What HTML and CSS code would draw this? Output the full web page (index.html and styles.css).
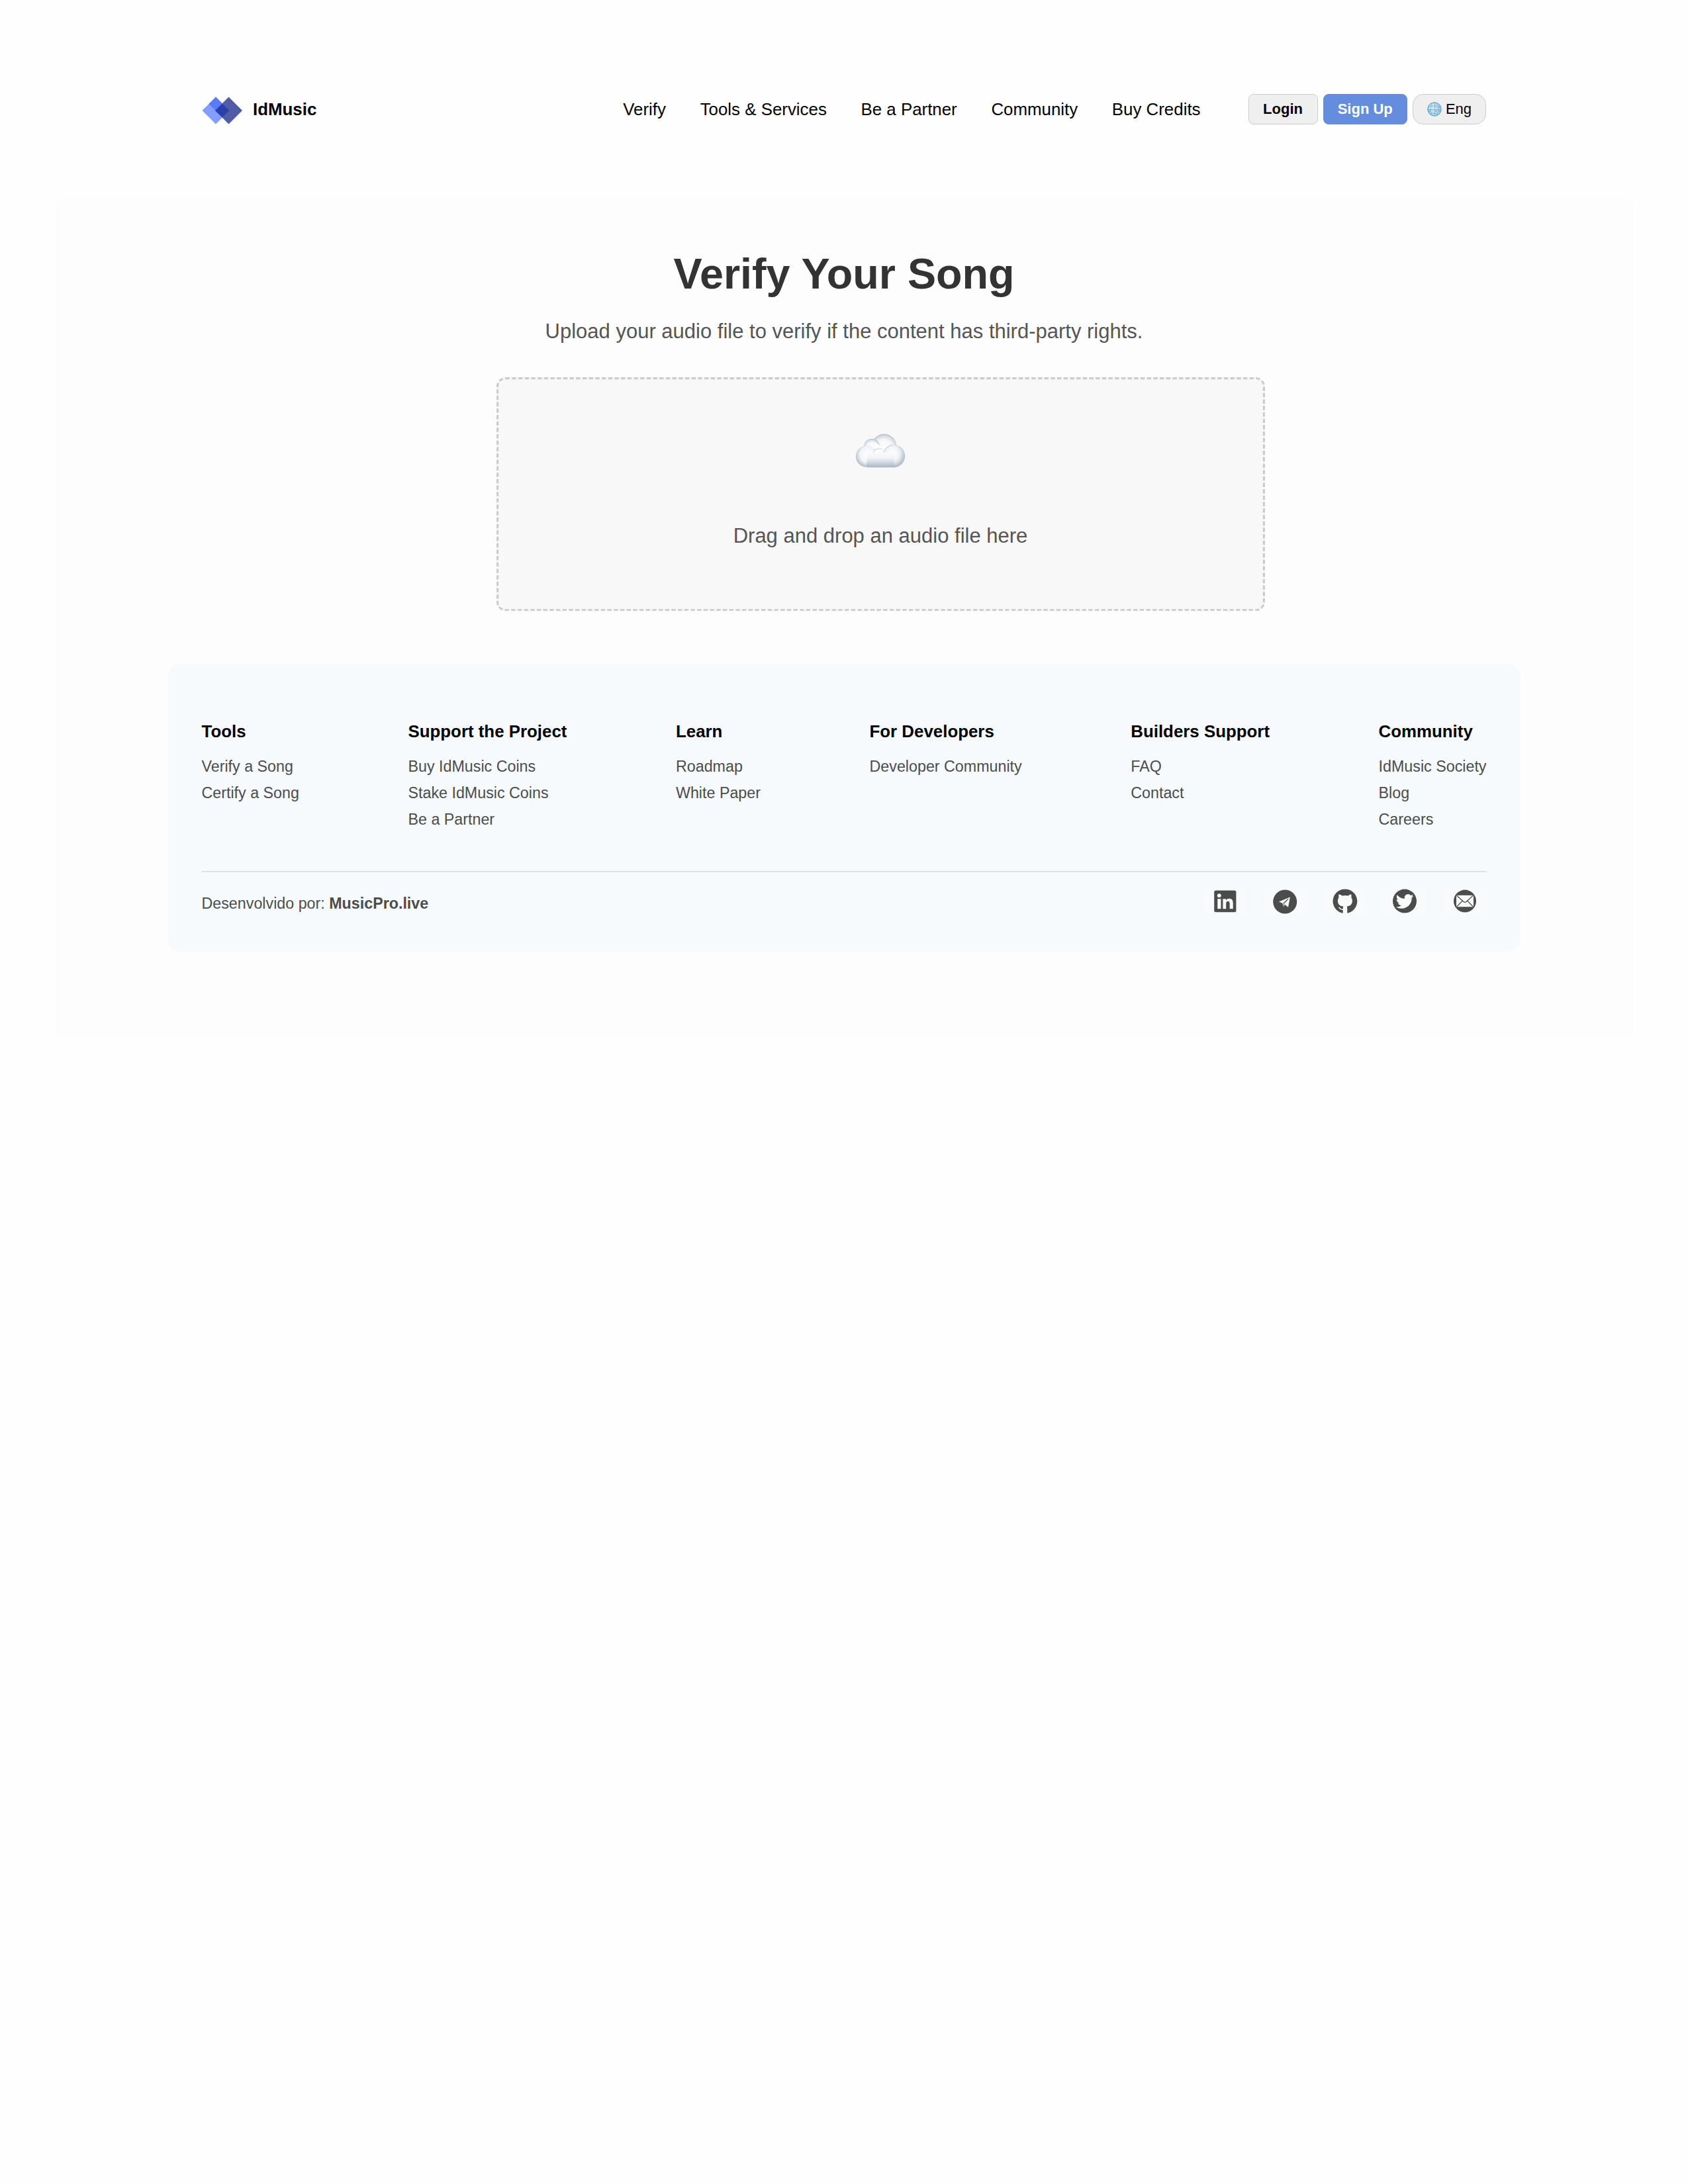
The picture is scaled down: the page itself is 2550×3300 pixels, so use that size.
FILE: index.html
```html
<!DOCTYPE html>
<html lang="en">
<head>
<meta charset="utf-8">
<title>IdMusic</title>
<link rel="stylesheet" href="styles.css">
</head>
<body>
<header class="header">
  <a class="brand">
    <svg class="brand-mark" width="62" height="42" viewBox="0 0 62 42">
      <path d="M21 0.5 41.500 21 21 41.500 0.500 21z" fill="#829dfc"/>
      <path d="M21 0.500 41.500 21 31 31.500 10.500 11z" fill="#587cf8"/>
      <path d="M40.500 0.500 61 21 40.500 41.500 20 21z" fill="#505ca8"/>
      <path d="M30.750 10.750 41.500 21 30.750 31.250 20 21z" fill="#2a40a8"/>
    </svg>
    <span>IdMusic</span>
  </a>
  <div class="header-right">
    <nav class="nav">
      <a>Verify</a><a>Tools &amp; Services</a><a>Be a Partner</a><a>Community</a><a>Buy Credits</a>
    </nav>
    <div class="actions">
      <button class="btn btn-login">Login</button>
      <button class="btn btn-signup">Sign Up</button>
      <button class="btn btn-lang">
        <svg width="22" height="22" viewBox="0 0 22 22">
          <circle cx="11" cy="11" r="10.500" fill="#7cc3e6"/>
          <circle cx="8.500" cy="9" r="6" fill="#b4e0f2"/>
          <g fill="none" stroke="#e9f7fc" stroke-width="1.800"><path d="M1.500 11h19M3.500 5.500h15M3.500 16.500h15M11 1v20"/><ellipse cx="11" cy="11" rx="5" ry="10"/></g>
          <g fill="none" stroke="#4c93b8" stroke-width="0.700"><circle cx="11" cy="11" r="10.300"/><path d="M1 11.500h20M3 6h16M3 17h16M11.500 1v20"/><ellipse cx="11" cy="11" rx="5.500" ry="10"/></g>
        </svg>
        <span>Eng</span>
      </button>
    </div>
  </div>
</header>

<main class="main">
  <h1 class="title">Verify Your Song</h1>
  <p class="subtitle">Upload your audio file to verify if the content has third-party rights.</p>
  <section class="dropzone">
    <svg class="dropzone-border" width="1161" height="353.400"><rect x="1.600" y="1.600" width="1157.800" height="350.200" rx="12" fill="#f8f8f8" stroke="#ccc" stroke-width="3.200" stroke-dasharray="6.460 3.230"/></svg>
    <svg class="cloud" width="76" height="52" viewBox="0 0 76 52">
      <defs>
        <radialGradient id="puff" cx=".5" cy=".55" r=".56"><stop offset="0" stop-color="#fff"/><stop offset=".6" stop-color="#f4f6f8"/><stop offset=".85" stop-color="#d5dce3"/><stop offset="1" stop-color="#a9b6c4"/></radialGradient>
        <radialGradient id="side" cx=".55" cy=".42" r=".6"><stop offset="0" stop-color="#fff"/><stop offset=".6" stop-color="#f2f4f7"/><stop offset="1" stop-color="#aeb9c6"/></radialGradient>
        <radialGradient id="sideRight" cx=".42" cy=".4" r=".62"><stop offset="0" stop-color="#fff"/><stop offset=".55" stop-color="#eff2f5"/><stop offset="1" stop-color="#aeb9c6"/></radialGradient>
        <linearGradient id="body" x1="0" y1="0" x2="0" y2="1"><stop offset="0" stop-color="#fdfdfe"/><stop offset=".5" stop-color="#f2f4f7"/><stop offset="1" stop-color="#a9b5c3"/></linearGradient>
      </defs>
      <circle cx="43.500" cy="19.500" r="18.800" fill="url(#puff)"/>
      <circle cx="25" cy="20" r="12" fill="url(#puff)"/>
      <circle cx="29" cy="23" r="9" fill="#fbfcfd"/>
      <circle cx="17.200" cy="34.500" r="16.300" fill="url(#side)"/>
      <circle cx="58" cy="34" r="17.200" fill="url(#sideRight)"/>
      <path d="M18 30C24 26 28 24 31 25C36 21 42 24 44 28L58 30L60 51.200H17z" fill="url(#body)"/>
      <path d="M27 28C29 24 34 21.500 41 24M43 29C45 23 50 18.500 56 17.300" fill="none" stroke="#cfd6de" stroke-width="1.200"/>
    </svg>
    <p class="dropzone-text">Drag and drop an audio file here</p>
  </section>

  <footer class="footer">
    <div class="columns">
      <div class="column"><h4>Tools</h4><a>Verify a Song</a><a>Certify a Song</a></div>
      <div class="column"><h4>Support the Project</h4><a>Buy IdMusic Coins</a><a>Stake IdMusic Coins</a><a>Be a Partner</a></div>
      <div class="column"><h4>Learn</h4><a>Roadmap</a><a>White Paper</a></div>
      <div class="column"><h4>For Developers</h4><a>Developer Community</a></div>
      <div class="column"><h4>Builders Support</h4><a>FAQ</a><a>Contact</a></div>
      <div class="column"><h4>Community</h4><a>IdMusic Society</a><a>Blog</a><a>Careers</a></div>
    </div>
    <div class="footer-bottom">
      <p class="credit">Desenvolvido por: <strong>MusicPro.live</strong></p>
      <div class="social">
        <svg viewBox="0 0 64.700 38">
          <rect x="15.200" y="2.400" width="33.200" height="32.800" rx="2.500" fill="#4b4d4c"/>
          <g fill="#f9fafa"><circle cx="22.800" cy="10.200" r="2.900"/><rect x="20.300" y="15.200" width="5.100" height="15"/><path d="M28.400 15.200h4.700v2.100q1.700-2.500 4.900-2.500c4.500 0 5.700 3 5.700 7v8.400h-5v-7.500q0-3.900-2.700-3.900-2.800 0-2.800 3.900v7.500h-4.800z"/></g>
        </svg>
        <svg viewBox="0 0 64.700 38">
          <circle cx="32.200" cy="19.500" r="18" fill="#4b4d4c"/>
          <path d="M39.800 12.400 23 19.500l5.300 2.200 1.700 5.300 2.300-3.100 4.800 3.800z" fill="#f9fafa"/>
          <path d="M29 22 37.200 15 30.800 22.600 30 26" fill="none" stroke="#4b4d4c" stroke-width="1"/>
        </svg>
        <svg viewBox="0 0 64.700 38">
          <circle cx="31.900" cy="18.800" r="18.400" fill="#4b4d4c"/>
          <g fill="#f9fafa"><path d="M22.700 8.200Q25.500 8.500 27.500 10.500Q32 9.300 36.500 10.500Q38.600 8.500 41 8.200Q42 10.600 41.300 13Q43 15.200 42.900 18.200C42.700 24 39 26 35.300 26.500H28.500C24.500 26 21 23.800 20.900 18.200Q20.900 15.200 22.500 13Q21.800 10.500 22.700 8.200z"/><path d="M30 25h4Q35.300 27 35.300 30v8h-6.600v-8Q28.700 27 30 25z"/></g>
          <path d="M22.300 28.200C25 28.500 24.500 32.200 29 31" fill="none" stroke="#f9fafa" stroke-width="1.500"/>
        </svg>
        <svg viewBox="0 0 64.700 38">
          <circle cx="32" cy="18.600" r="18" fill="#4b4d4c"/>
          <path transform="translate(18.800 5.700) scale(1.110)" fill="#f9fafa" d="M23.953 4.570a10 10 0 0 1-2.825.775 4.958 4.958 0 0 0 2.163-2.723c-.951.555-2.005.959-3.127 1.184a4.920 4.920 0 0 0-8.384 4.482C7.690 8.095 4.067 6.130 1.640 3.162a4.822 4.822 0 0 0-.666 2.475c0 1.710.870 3.213 2.188 4.096a4.904 4.904 0 0 1-2.228-.616v.060a4.923 4.923 0 0 0 3.946 4.827 4.996 4.996 0 0 1-2.212.085 4.936 4.936 0 0 0 4.604 3.417 9.867 9.867 0 0 1-6.102 2.105c-.390 0-.779-.023-1.170-.067a13.995 13.995 0 0 0 7.557 2.209c9.053 0 13.998-7.496 13.998-13.985 0-.210 0-.420-.015-.630A9.935 9.935 0 0 0 24 4.590z"/>
        </svg>
        <svg viewBox="0 0 64.700 38">
          <circle cx="32" cy="18.600" r="17" fill="#4b4d4c"/>
          <rect x="19" y="9.800" width="26" height="17.400" fill="#f9fafa"/>
          <path d="M19.500 10 30 19.500Q32 21.300 34 19.500L44.500 10M19.500 27 28 18.500M44.500 27 36 18.500" fill="none" stroke="#4b4d4c" stroke-width="1.200"/>
        </svg>
      </div>
    </div>
  </footer>
</main>
</body>
</html>
```
FILE: styles.css
```css
* { box-sizing: border-box; }

body {
  margin: 0;
  min-height: 3300px;
  background: #fefefe;
  color: #000;
  font-family: "Liberation Sans", Arial, sans-serif;
  font-size: 25.87px;
}

h1, h4, p { margin: 0; }

.header {
  display: flex;
  justify-content: space-between;
  align-items: center;
  height: 299px;
  padding: 142px 305px 111px;
}

.brand {
  display: flex;
  align-items: center;
  gap: 15px;
  font-weight: bold;
}

.brand-mark { margin-top: 4px; }

.header-right {
  display: flex;
  align-items: center;
  gap: 72px;
}

.nav { display: flex; gap: 51.7px; }

.actions { display: flex; gap: 8px; }

.btn {
  display: flex;
  align-items: center;
  justify-content: center;
  height: 46px;
  padding: 0;
  border: 1.6px solid #ccc;
  border-radius: 8px;
  background: #efefef;
  color: #000;
  font-family: inherit;
  font-size: 22px;
}

.btn-login { width: 105px; font-weight: bold; }

.btn-signup {
  width: 127.5px;
  border-color: #648ddd;
  background: #648ddd;
  color: #fff;
  font-weight: bold;
}

.btn-lang { width: 111px; gap: 6px; border-radius: 16px; }

.main {
  height: 1266px;
  margin: 0 83px;
  padding: 79px 170px 0;
  background: #fdfdfd;
}

.title {
  color: #333;
  font-size: 64.7px;
  line-height: 72px;
  text-align: center;
}

.subtitle {
  margin-top: 33px;
  color: #555;
  font-size: 31px;
  line-height: 36px;
  text-align: center;
}

.dropzone {
  position: relative;
  display: flex;
  flex-direction: column;
  align-items: center;
  width: 1161px;
  height: 353.4px;
  margin: 50.6px 0 0 496.5px;
  padding-top: 85.5px;
}

.dropzone-border { position: absolute; inset: 0; }

.cloud { position: relative; }

.dropzone-text {
  position: relative;
  margin-top: 85px;
  color: #555;
  font-size: 31px;
  line-height: 36px;
}

.footer {
  height: 434.6px;
  margin-top: 80px;
  padding: 84px 51.5px 0;
  border-radius: 19.4px;
  background: #f7fafd;
}

.columns {
  display: flex;
  justify-content: space-between;
  height: 229px;
}

.column {
  display: flex;
  flex-direction: column;
  color: #4b4d4c;
  font-size: 23.28px;
  line-height: 39.7px;
}

.column h4 {
  margin-bottom: 16.5px;
  color: #000;
  font-size: 25.87px;
  line-height: 36px;
}

.footer-bottom {
  display: flex;
  justify-content: space-between;
  align-items: flex-start;
  padding-top: 25px;
  border-top: 2px solid #e0e0e0;
}

.credit {
  margin-top: 9px;
  color: #4b4d4c;
  font-size: 23.28px;
  line-height: 26px;
}

.social { display: flex; gap: 25.9px; }

.social svg {
  width: 64.7px;
  height: 38px;
  background: #f8fafb;
}
```
